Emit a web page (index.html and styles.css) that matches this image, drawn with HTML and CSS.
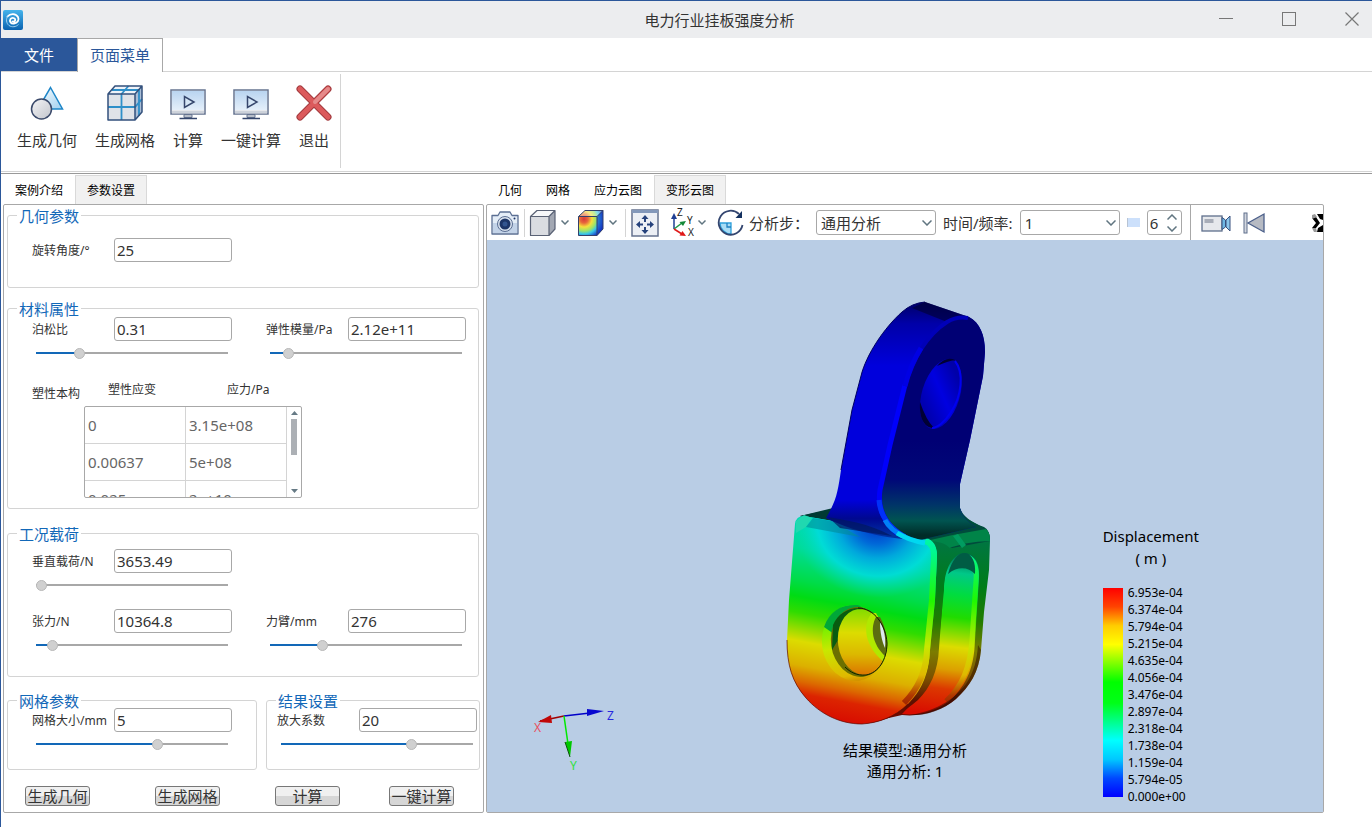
FILE: index.html
```html
<!DOCTYPE html>
<html lang="zh-CN">
<head>
    <meta charset="UTF-8">
    <meta name="viewport" content="width=device-width, initial-scale=1.0">
    <title>电力行业挂板强度分析</title>
    <link rel="stylesheet" href="styles.css">
</head>
<body>
    <header class="titlebar">
        <svg class="app-logo" width="20" height="20" viewBox="0 0 20 20">
            <defs>
                <linearGradient id="logoBg" x1="0" y1="0" x2="0" y2="1">
                    <stop offset="0" stop-color="#45b4ec"/>
                    <stop offset="1" stop-color="#0a62b0"/>
                </linearGradient>
            </defs>
            <rect width="20" height="20" rx="2" fill="url(#logoBg)"/>
            <path d="M9.500 11.500C11.500 12 13 10.500 12 9C11 7.500 8.500 7.500 7.500 9C6 11.500 8 14 11 13.500C14.500 13 16.500 10 15 7C13 3.500 7.500 3 4.500 6.500" fill="none" stroke="#fff" stroke-width="1.800" stroke-linecap="round"/>
            <path d="M4.500 6.500C3 9 3 13 6 15.500C9 17.500 13 17 15.500 14.500" fill="none" stroke="#9bd0f2" stroke-width="1"/>
        </svg>
        <h1 class="window-title">电力行业挂板强度分析</h1>
        <div class="window-buttons">
            <button type="button" aria-label="最小化"><svg width="16" height="16" viewBox="0 0 16 16"><path d="M1 7.500H15" stroke="#777" fill="none"/></svg></button>
            <button type="button" aria-label="最大化"><svg width="16" height="16" viewBox="0 0 16 16"><rect x="1.500" y="1.500" width="13" height="13" stroke="#777" fill="none"/></svg></button>
            <button type="button" aria-label="关闭"><svg width="16" height="16" viewBox="0 0 16 16"><path d="M1.500 1.500L14.500 14.500M14.500 1.500L1.500 14.500" stroke="#777" stroke-width="1.200" fill="none"/></svg></button>
        </div>
    </header>

    <nav class="menu-tabs">
        <button type="button" class="menu-file">文件</button>
        <button type="button" class="menu-tab">页面菜单</button>
    </nav>

    <div class="ribbon">
        <div class="ribbon-group">
            <button type="button" class="ribbon-btn">
                <svg width="36" height="36" viewBox="0 0 36 36">
                    <defs>
                        <linearGradient id="greyFill" x1="0" y1="0" x2="1" y2="1">
                            <stop offset="0" stop-color="#f4f4f6"/>
                            <stop offset="1" stop-color="#c2c5cc"/>
                        </linearGradient>
                        <linearGradient id="blueFill" x1="0" y1="0" x2="1" y2="1">
                            <stop offset="0" stop-color="#fff"/>
                            <stop offset="1" stop-color="#9fd0ef"/>
                        </linearGradient>
                    </defs>
                    <path d="M21.500 2.500L33.500 24H9Z" fill="url(#blueFill)" stroke="#1e86c8" stroke-width="1.500"/>
                    <circle cx="12.500" cy="24" r="10" fill="url(#greyFill)" stroke="#3b4a6b" stroke-width="1.500"/>
                </svg>
                <span>生成几何</span>
            </button>
            <button type="button" class="ribbon-btn">
                <svg width="36" height="36" viewBox="0 0 36 36">
                    <path d="M1 9L8 1H35V27L28 35H1Z" fill="#dfe2e8"/>
                    <path d="M1 9L8 1H35L28 9Z" fill="#eef2f8"/>
                    <path d="M28 9L35 1V27L28 35Z" fill="#a9bdd6"/>
                    <path d="M1 22H28L35 14M14.500 35V9L21.500 1M5 5H32V31" fill="none" stroke="#2e8fc9" stroke-width="1.800"/>
                    <path d="M1 9L8 1H35V27L28 35H1ZM1 9H28V35M28 9L35 1" fill="none" stroke="#33507c" stroke-width="1.500" stroke-linejoin="round"/>
                </svg>
                <span>生成网格</span>
            </button>
            <button type="button" class="ribbon-btn">
                <svg width="36" height="36" viewBox="0 0 36 36">
                    <defs>
                        <linearGradient id="screenFill" x1="0" y1="0" x2="0" y2="1">
                            <stop offset="0" stop-color="#b9d4f0"/>
                            <stop offset="1" stop-color="#e4effa"/>
                        </linearGradient>
                    </defs>
                    <rect x="1" y="5" width="34" height="24" fill="#fff" stroke="#667490" stroke-width="1.500"/>
                    <rect x="2" y="6" width="32" height="19" fill="url(#screenFill)"/>
                    <rect x="2" y="25.500" width="32" height="3" fill="#cdd2da"/>
                    <path d="M14.500 11.500V22.500L24 17Z" fill="#d5e6f6" stroke="#35466c" stroke-width="1.500"/>
                    <path d="M14 29.500H22V32.500H14Z" fill="#b8bec9" stroke="#667490"/>
                    <path d="M9.500 33.500H27" stroke="#35466c" stroke-width="1.500"/>
                </svg>
                <span>计算</span>
            </button>
            <button type="button" class="ribbon-btn">
                <svg width="36" height="36" viewBox="0 0 36 36">
                    <rect x="1" y="5" width="34" height="24" fill="#fff" stroke="#667490" stroke-width="1.500"/>
                    <rect x="2" y="6" width="32" height="19" fill="url(#screenFill)"/>
                    <rect x="2" y="25.500" width="32" height="3" fill="#cdd2da"/>
                    <path d="M14.500 11.500V22.500L24 17Z" fill="#d5e6f6" stroke="#35466c" stroke-width="1.500"/>
                    <path d="M14 29.500H22V32.500H14Z" fill="#b8bec9" stroke="#667490"/>
                    <path d="M9.500 33.500H27" stroke="#35466c" stroke-width="1.500"/>
                </svg>
                <span>一键计算</span>
            </button>
            <button type="button" class="ribbon-btn">
                <svg width="36" height="36" viewBox="0 0 36 36">
                    <path d="M4 4L32 32M32 4L4 32" stroke="#a33a3e" stroke-width="7" stroke-linecap="round"/>
                    <path d="M4 4L32 32M32 4L4 32" stroke="#dc5a5c" stroke-width="5" stroke-linecap="round"/>
                    <path d="M32 4L19 17" stroke="#e58a8a" stroke-width="4" stroke-linecap="round"/>
                </svg>
                <span>退出</span>
            </button>
        </div>
    </div>

    <main class="workspace">
        <section class="side">
            <div class="page-tabs" role="tablist">
                <button type="button" role="tab" aria-selected="false">案例介绍</button>
                <button type="button" role="tab" aria-selected="true" class="active">参数设置</button>
            </div>
            <form class="panel params">
                <fieldset class="group geometry">
                    <legend>几何参数</legend>
                    <div class="field">
                        <label for="angle">旋转角度/°</label>
                        <input type="text" id="angle" value="25">
                    </div>
                </fieldset>

                <fieldset class="group material">
                    <legend>材料属性</legend>
                    <div class="field-row">
                        <div class="field">
                            <label for="poisson">泊松比</label>
                            <input type="text" id="poisson" value="0.31">
                            <input type="range" aria-label="泊松比" min="0" max="100" value="21" style="--value: 21%">
                        </div>
                        <div class="field">
                            <label for="modulus">弹性模量/Pa</label>
                            <input type="text" id="modulus" value="2.12e+11">
                            <input type="range" aria-label="弹性模量" min="0" max="100" value="7" style="--value: 7%">
                        </div>
                    </div>
                    <div class="plastic">
                        <span class="plastic-label">塑性本构</span>
                        <div>
                            <div class="plastic-head">
                                <span>塑性应变</span>
                                <span>应力/Pa</span>
                            </div>
                            <div class="plastic-box">
                                <table>
                                    <tbody>
                                        <tr><td>0</td><td>3.15e+08</td></tr>
                                        <tr><td>0.00637</td><td>5e+08</td></tr>
                                        <tr><td>0.025</td><td>2e+10</td></tr>
                                    </tbody>
                                </table>
                                <div class="scrollbar">
                                    <svg width="7" height="4" viewBox="0 0 7 4"><path d="M0 4L3.500 0L7 4Z" fill="#667a85"/></svg>
                                    <div class="scroll-thumb"></div>
                                    <svg width="7" height="4" viewBox="0 0 7 4"><path d="M0 0L3.500 4L7 0Z" fill="#667a85"/></svg>
                                </div>
                            </div>
                        </div>
                    </div>
                </fieldset>

                <fieldset class="group load">
                    <legend>工况载荷</legend>
                    <div class="field-row">
                        <div class="field">
                            <label for="vertical">垂直载荷/N</label>
                            <input type="text" id="vertical" value="3653.49">
                            <input type="range" aria-label="垂直载荷" min="0" max="100" value="0" style="--value: 0%">
                        </div>
                    </div>
                    <div class="field-row">
                        <div class="field">
                            <label for="tension">张力/N</label>
                            <input type="text" id="tension" value="10364.8">
                            <input type="range" aria-label="张力" min="0" max="100" value="6" style="--value: 6%">
                        </div>
                        <div class="field">
                            <label for="arm">力臂/mm</label>
                            <input type="text" id="arm" value="276">
                            <input type="range" aria-label="力臂" min="0" max="100" value="26" style="--value: 26%">
                        </div>
                    </div>
                </fieldset>

                <div class="group-row">
                    <fieldset class="group mesh">
                        <legend>网格参数</legend>
                        <div class="field">
                            <label for="meshSize">网格大小/mm</label>
                            <input type="text" id="meshSize" value="5">
                            <input type="range" aria-label="网格大小" min="0" max="100" value="64" style="--value: 64%">
                        </div>
                    </fieldset>
                    <fieldset class="group result">
                        <legend>结果设置</legend>
                        <div class="field">
                            <label for="scale">放大系数</label>
                            <input type="text" id="scale" value="20">
                            <input type="range" aria-label="放大系数" min="0" max="100" value="69" style="--value: 69%">
                        </div>
                    </fieldset>
                </div>

                <div class="actions">
                    <button type="button">生成几何</button>
                    <button type="button">生成网格</button>
                    <button type="button">计算</button>
                    <button type="button">一键计算</button>
                </div>
            </form>
        </section>

        <section class="view">
            <div class="page-tabs" role="tablist">
                <button type="button" role="tab" aria-selected="false">几何</button>
                <button type="button" role="tab" aria-selected="false">网格</button>
                <button type="button" role="tab" aria-selected="false">应力云图</button>
                <button type="button" role="tab" aria-selected="true" class="active">变形云图</button>
            </div>
            <div class="panel viewer">
                <div class="toolbar">
                    <button type="button" class="tool" aria-label="截图">
                        <svg width="28" height="28" viewBox="0 0 28 28">
                            <path d="M1 6.500H7L9 3H19L21 6.500H27V25H1Z" fill="#e4edf7" stroke="#5b6f93" stroke-width="1.300" stroke-linejoin="round"/>
                            <path d="M2 14H26V24H2Z" fill="#c3d3e8"/>
                            <circle cx="14" cy="15" r="7.500" fill="#d9e2ee" stroke="#5b6f93"/>
                            <circle cx="14" cy="15" r="5.500" fill="#1d3567"/>
                            <circle cx="14" cy="15" r="2.500" fill="#33558f"/>
                            <circle cx="23.500" cy="9.500" r="1" fill="#1d3567"/>
                        </svg>
                    </button>
                    <i class="sep"></i>
                    <button type="button" class="tool with-menu" aria-label="显示模式">
                        <svg width="28" height="28" viewBox="0 0 28 28">
                            <path d="M1.500 7.500L8 1.500H26V20L20 26.500H1.500Z" fill="#dadce1"/>
                            <path d="M1.500 7.500L8 1.500H26L20 7.500Z" fill="#f6f7f9"/>
                            <path d="M20 7.500L26 1.500V20L20 26.500Z" fill="#a3a8b3"/>
                            <path d="M1.500 7.500L8 1.500H26V20L20 26.500H1.500ZM1.500 7.500H20V26.500M20 7.500L26 1.500" fill="none" stroke="#5a6275" stroke-width="1.200" stroke-linejoin="round"/>
                        </svg>
                        <svg class="chevron" width="8" height="5" viewBox="0 0 8 5"><path d="M0.500 0.500L4 4L7.500 0.500"/></svg>
                    </button>
                    <button type="button" class="tool with-menu" aria-label="云图">
                        <svg width="28" height="28" viewBox="0 0 28 28">
                            <defs>
                                <radialGradient id="cubeHeat" gradientUnits="userSpaceOnUse" cx="7" cy="10" r="20">
                                    <stop offset="0" stop-color="#d8383a"/>
                                    <stop offset="0.200" stop-color="#e8663c"/>
                                    <stop offset="0.400" stop-color="#f5e03c"/>
                                    <stop offset="0.600" stop-color="#9be36a"/>
                                    <stop offset="0.750" stop-color="#3ac8e8"/>
                                    <stop offset="1" stop-color="#1438c8"/>
                                </radialGradient>
                            </defs>
                            <path d="M1.500 7.500L8 1.500H26V20L20 26.500H1.500Z" fill="url(#cubeHeat)"/>
                            <path d="M1.500 7.500L8 1.500H26L20 7.500Z" fill="#fff" opacity="0.350"/>
                            <path d="M20 7.500L26 1.500V20L20 26.500Z" fill="#1636c0" opacity="0.600"/>
                            <path d="M1.500 7.500L8 1.500H26V20L20 26.500H1.500ZM1.500 7.500H20V26.500M20 7.500L26 1.500" fill="none" stroke="#33406a" stroke-linejoin="round"/>
                        </svg>
                        <svg class="chevron" width="8" height="5" viewBox="0 0 8 5"><path d="M0.500 0.500L4 4L7.500 0.500"/></svg>
                    </button>
                    <i class="sep"></i>
                    <button type="button" class="tool" aria-label="适应窗口">
                        <svg width="28" height="28" viewBox="0 0 28 28">
                            <rect x="1" y="1" width="26" height="26" fill="#eceff5" stroke="#64728e" stroke-width="1.500"/>
                            <rect x="1" y="1" width="26" height="3" fill="#8398ba"/>
                            <path d="M14 6L17.500 10H15V13H13V10H10.500ZM14 25L17.500 21H15V18H13V21H10.500ZM5 15.500L9 12V14.500H12V16.500H9V19ZM23 15.500L19 12V14.500H16V16.500H19V19Z" fill="#26427c"/>
                        </svg>
                    </button>
                    <button type="button" class="tool with-menu axes" aria-label="视角">
                        <svg width="28" height="28" viewBox="0 0 28 28">
                            <path d="M4 20V8" stroke="#1f3f94" stroke-width="1.500"/>
                            <path d="M4 4L7 10H1Z" fill="#1f3f94"/>
                            <path d="M4 20L12 14" stroke="#1f9a44" stroke-width="1.500"/>
                            <path d="M16 12L13 17L9.500 13Z" fill="#148838"/>
                            <path d="M4 20L12 25" stroke="#e01818" stroke-width="1.500"/>
                            <path d="M16 27L9.500 26.500L12.500 22Z" fill="#e01818"/>
                            <text x="7" y="7" class="axis-name">Z</text>
                            <text x="17" y="15" class="axis-name">Y</text>
                            <text x="18" y="27" class="axis-name">X</text>
                        </svg>
                        <svg class="chevron" width="8" height="5" viewBox="0 0 8 5"><path d="M0.500 0.500L4 4L7.500 0.500"/></svg>
                    </button>
                    <button type="button" class="tool" aria-label="旋转">
                        <svg width="28" height="28" viewBox="0 0 28 28">
                            <path d="M3 14H14V25C8 25 3 20 3 14Z" fill="#a9dcf5" stroke="#2c9fda" stroke-width="1.300"/>
                            <path d="M10 14V18H14" fill="none" stroke="#1f7fc0" stroke-width="1.300"/>
                            <path d="M22 5A12 12 0 1 0 25.500 16" fill="none" stroke="#33456f" stroke-width="1.800"/>
                            <path d="M25 2V9H18.500Z" fill="#14305f"/>
                        </svg>
                    </button>
                    <label class="tool-label" for="step">分析步：</label>
                    <span class="select step-select">
                        <select id="step"><option>通用分析</option></select>
                        <svg class="chevron" width="10" height="6" viewBox="0 0 10 6"><path d="M0.500 0.500L5 5L9.500 0.500"/></svg>
                    </span>
                    <label class="tool-label" for="time">时间/频率:</label>
                    <span class="select time-select">
                        <select id="time"><option>1</option></select>
                        <svg class="chevron" width="10" height="6" viewBox="0 0 10 6"><path d="M0.500 0.500L5 5L9.500 0.500"/></svg>
                    </span>
                    <i class="mark"></i>
                    <span class="spin">
                        <input type="text" aria-label="帧" value="6">
                        <span class="spin-arrows">
                            <svg class="chevron" width="10" height="6" viewBox="0 0 10 6"><path d="M0.500 5.500L5 1L9.500 5.500"/></svg>
                            <svg class="chevron" width="10" height="6" viewBox="0 0 10 6"><path d="M0.500 0.500L5 5L9.500 0.500"/></svg>
                        </span>
                    </span>
                    <i class="sep tall"></i>
                    <button type="button" class="tool record" aria-label="录制">
                        <svg width="30" height="28" viewBox="0 0 30 28">
                            <rect x="1" y="7" width="20" height="15" fill="#e6e8ec" stroke="#5f6f8c" stroke-width="1.300"/>
                            <rect x="3.500" y="10" width="9" height="4" fill="#a8adb8"/>
                            <path d="M21 8.500L24.500 11V18L21 20.500Z" fill="#6fb7e4" stroke="#38507e"/>
                            <path d="M29 7L25 11V18L29 22Z" fill="#8cc6ec" stroke="#38507e"/>
                        </svg>
                    </button>
                    <button type="button" class="tool" aria-label="第一帧">
                        <svg width="24" height="28" viewBox="0 0 24 28">
                            <rect x="2" y="4" width="3" height="20" fill="#d3d7df" stroke="#5f6f8c"/>
                            <path d="M22 5V23L6 14Z" fill="#b6bac3" stroke="#4b5f8a" stroke-width="1.300"/>
                        </svg>
                    </button>
                    <button type="button" class="tool more" aria-label="更多">
                        <svg width="11" height="18" viewBox="0 0 11 18">
                            <path d="M5 0H11V6L8 5ZM0 4L4 3L8 9L4 14H0L4 9ZM6 14L11 11V18H5Z" fill="#000"/>
                            <path d="M0 1L3 0L5 3L0 5ZM0 14L4 14L5 18H2Z" fill="#999"/>
                        </svg>
                    </button>
                </div>

                <div class="canvas">
                    <svg class="model" width="220" height="440" viewBox="780 295 220 440">
                        <defs>
                            <linearGradient id="front" gradientUnits="userSpaceOnUse" x1="874" y1="525" x2="838" y2="721">
                                <stop offset="0" stop-color="#00d8b8"/>
                                <stop offset="0.180" stop-color="#00dc98"/>
                                <stop offset="0.340" stop-color="#00dc48"/>
                                <stop offset="0.420" stop-color="#00dc14"/>
                                <stop offset="0.500" stop-color="#30dc00"/>
                                <stop offset="0.640" stop-color="#dcdc00"/>
                                <stop offset="0.760" stop-color="#dcb000"/>
                                <stop offset="0.840" stop-color="#dc6800"/>
                                <stop offset="0.900" stop-color="#dc2400"/>
                                <stop offset="1" stop-color="#d80c00"/>
                            </linearGradient>
                            <radialGradient id="cold" gradientUnits="userSpaceOnUse" cx="876" cy="526" r="84" gradientTransform="translate(876 526) rotate(8) scale(1 0.850) translate(-876 -526)">
                                <stop offset="0" stop-color="#0030c8"/>
                                <stop offset="0.250" stop-color="#0068d8"/>
                                <stop offset="0.450" stop-color="#00a8dc"/>
                                <stop offset="0.700" stop-color="#00dcdc" stop-opacity="0.900"/>
                                <stop offset="1" stop-color="#00dcb0" stop-opacity="0"/>
                            </radialGradient>
                            <linearGradient id="edge" gradientUnits="userSpaceOnUse" x1="0" y1="530" x2="0" y2="720">
                                <stop offset="0" stop-color="#00744c"/>
                                <stop offset="0.300" stop-color="#007c18"/>
                                <stop offset="0.480" stop-color="#207c00"/>
                                <stop offset="0.640" stop-color="#7c7c00"/>
                                <stop offset="0.780" stop-color="#7c5000"/>
                                <stop offset="0.900" stop-color="#5c1000"/>
                                <stop offset="1" stop-color="#700800"/>
                            </linearGradient>
                            <linearGradient id="inner" gradientUnits="userSpaceOnUse" x1="970" y1="553" x2="950" y2="716">
                                <stop offset="0" stop-color="#005c48"/>
                                <stop offset="0.130" stop-color="#00c888"/>
                                <stop offset="0.260" stop-color="#00dc40"/>
                                <stop offset="0.400" stop-color="#20dc00"/>
                                <stop offset="0.580" stop-color="#dcdc00"/>
                                <stop offset="0.720" stop-color="#dca000"/>
                                <stop offset="0.840" stop-color="#dc3800"/>
                                <stop offset="1" stop-color="#d80c00"/>
                            </linearGradient>
                            <linearGradient id="chamfer" gradientUnits="userSpaceOnUse" x1="0" y1="515" x2="0" y2="720">
                                <stop offset="0" stop-color="#00f0d8"/>
                                <stop offset="0.180" stop-color="#00f890"/>
                                <stop offset="0.420" stop-color="#20f800"/>
                                <stop offset="0.640" stop-color="#c8e800"/>
                                <stop offset="0.780" stop-color="#e0b800"/>
                                <stop offset="0.880" stop-color="#b03800"/>
                                <stop offset="1" stop-color="#900800"/>
                            </linearGradient>
                            <linearGradient id="armSide" gradientUnits="userSpaceOnUse" x1="0" y1="300" x2="0" y2="535">
                                <stop offset="0" stop-color="#000060"/>
                                <stop offset="0.100" stop-color="#0000a8"/>
                                <stop offset="0.280" stop-color="#0000dc"/>
                                <stop offset="0.850" stop-color="#0000dc"/>
                                <stop offset="0.930" stop-color="#000890"/>
                                <stop offset="1" stop-color="#0030a0"/>
                            </linearGradient>
                            <linearGradient id="armFace" gradientUnits="userSpaceOnUse" x1="0" y1="440" x2="0" y2="535">
                                <stop offset="0" stop-color="#000074"/>
                                <stop offset="0.420" stop-color="#000878"/>
                                <stop offset="0.680" stop-color="#003468"/>
                                <stop offset="0.850" stop-color="#005450"/>
                                <stop offset="1" stop-color="#002c28"/>
                            </linearGradient>
                            <linearGradient id="bore" gradientUnits="userSpaceOnUse" x1="928" y1="410" x2="960" y2="382">
                                <stop offset="0" stop-color="#0000b0"/>
                                <stop offset="0.500" stop-color="#0000e0"/>
                                <stop offset="1" stop-color="#0000a8"/>
                            </linearGradient>
                            <linearGradient id="far" gradientUnits="userSpaceOnUse" x1="870" y1="605" x2="858" y2="676">
                                <stop offset="0" stop-color="#70dc00"/>
                                <stop offset="0.400" stop-color="#dcdc00"/>
                                <stop offset="0.700" stop-color="#dcb800"/>
                                <stop offset="1" stop-color="#dc7000"/>
                            </linearGradient>
                        </defs>
                        <!-- rear lug -->
                        <path d="M925 540L962 516L984 528Q990 531 990 540L989 570L984 612L981 650C979 672 970 686 956 699C942 711 922 717 902 715L880 720Z" fill="url(#edge)"/>
                        <path d="M944 590C944 568 954 553 964 553C974 553 980 562 979 578L975 640C974 672 964 688 948 702C934 712 918 716 902 714L925 690L938 650Z" fill="url(#inner)"/>
                        <path d="M968 557C975 560 977 568 976 580L972 640C970 668 962 686 946 701" fill="none" stroke="url(#chamfer)" stroke-width="5"/>
                        <path d="M948 574C952 560 958 553 965 553C972 554 976 562 975 574C968 567 958 566 948 574Z" fill="#005c44"/>
                        <path d="M981 650C979 672 970 686 956 699C942 711 924 716 910 715C940 710 956 697 966 684C974 672 977 660 978 645Z" fill="#280800" opacity="0.500"/>
                        <!-- top faces -->
                        <path d="M800 516L829 510L900 500L960 508Q964 520 984 527Q990 530 990 541L952 548L925 541Z" fill="#004c3c"/>
                        <path d="M926 541Q955 534 986 529Q990 532 990 541Q965 541 942 551Z" fill="#008448"/>
                        <path d="M958 534L966 545L962 548L953 536Z" fill="#009c60"/>
                        <path d="M880 522L961 514L968 523L915 538Z" fill="#002824"/>
                        <path d="M800 516L833 508L840 520L812 522Z" fill="#003a34"/>
                        <!-- front lug thickness -->
                        <path d="M930 541Q947 542 951 550C945 566 943 590 942 610L939 648C938 672 930 688 918 700C905 712 885 721 870 723L925 680L936 610Z" fill="url(#edge)"/>
                        <!-- front lug face -->
                        <path d="M795 524Q796 516 804 516L850 524L922 539Q937 541 937 556L935 600L930 650C929 676 920 692 908 704C895 717 878 723 862 724C840 724 820 714 806 698C792 682 787 665 787 640L789 600Z" fill="url(#front)"/>
                        <path d="M795 524Q796 516 804 516L850 524L922 539Q937 541 937 556L935 610L788 610Z" fill="url(#cold)"/>
                        <path d="M925 541Q934 543 934 556L932 600L927 650C926 674 917 690 904 703" fill="none" stroke="url(#chamfer)" stroke-width="6"/>
                        <path d="M787 640C787 665 792 682 806 698C820 714 840 724 862 724C878 723 895 717 908 704" fill="none" stroke="#600800" stroke-width="1" opacity="0.700"/>
                        <path d="M796 521L804 515L812 518L806 527L796 533Z" fill="#20d8b0"/>
                        <path d="M806 527L813 518L832 521L860 537Z" fill="#008c98" opacity="0.600"/>
                        <!-- pin hole -->
                        <ellipse cx="854" cy="643" rx="32" ry="38" fill="url(#chamfer)" transform="rotate(-8 854 643)"/>
                        <path d="M824 627C830 610 842 604 858 605L878 615L852 618L834 634Z" fill="#00a838"/>
                        <ellipse cx="859" cy="642" rx="28" ry="35" fill="#6c7000" transform="rotate(-8 859 642)"/>
                        <path d="M833 625C838 613 849 607 862 608L846 622L838 640L832 650Z" fill="#085c10"/>
                        <ellipse cx="862" cy="642" rx="24" ry="33" fill="url(#far)" transform="rotate(-8 862 642)"/>
                        <path d="M872 613C862 624 864 646 884 662C888 645 887 630 876 613Z" fill="#b0e800"/>
                        <path d="M876 617C870 628 872 644 885 656C888 640 886 628 880 617Z" fill="#5c6c10"/>
                        <path d="M880 622C880 632 882 642 885 648C886 638 884 628 880 622Z" fill="#dce8f0"/>
                        <path d="M858 608C874 608 886 625 887 643C887 660 878 673 866 675C857 676 850 672 845 667" fill="none" stroke="#102000" stroke-width="1"/>
                        <!-- arm -->
                        <path d="M826 518C837 500 838 490 841 470L852 410L861 376C866 355 884 328 902 312Q912 303 925 302L969 317C980 323 985 335 985 352L983 376L970 440L960 484L960 508Q963 520 976 527L920 540C898 540 858 534 826 518Z" fill="url(#armSide)"/>
                        <path d="M841 470L852 410L861 376C866 355 884 328 902 312Q912 303 925 302" fill="none" stroke="#000060"/>
                        <path d="M925 302L969 317Q957 316 947 322L912 308Z" fill="#000030" opacity="0.600"/>
                        <path d="M969 317C980 323 985 335 985 352L983 376L970 440L960 484L960 508Q963 520 976 527L920 540C900 535 881 520 880 492L890 445L905 385C912 358 928 333 947 321Q957 315 969 317Z" fill="url(#armFace)"/>
                        <path d="M905 385L890 445L880 490C877 510 885 523 897 533" fill="none" stroke="#0000fc" stroke-width="5"/>
                        <path d="M905 386C912 359 928 334 947 322Q957 316 968 318" fill="none" stroke="#0000b8" stroke-width="4"/>
                        <path d="M905 386Q910 366 921 348" fill="none" stroke="#0000e4" stroke-width="5"/>
                        <path d="M879 500C880 515 888 527 905 537" fill="none" stroke="#0030f8" stroke-width="5"/>
                        <path d="M885 520Q890 530 905 537" fill="none" stroke="#0080f8" stroke-width="5"/>
                        <path d="M897 533Q908 540 925 543" fill="none" stroke="#00d8f0" stroke-width="5"/>
                        <path d="M828 517C845 520 868 523 892 536L872 533L840 528Z" fill="#001860" opacity="0.700"/>
                        <ellipse cx="941" cy="394" rx="19" ry="36" fill="url(#bore)" transform="rotate(17 941 394)"/>
                        <path d="M920 402C919 418 924 428 934 428Q926 420 920 402ZM937 366Q946 356 955 360Q948 361 937 366Z" fill="#000034"/>
                        <path d="M955 361C964 372 962 396 951 412C945 422 937 428 932 428" fill="none" stroke="#0000f0" stroke-width="2"/>
                    </svg>

                    <p class="caption">结果模型:通用分析<br>通用分析: 1</p>

                    <svg class="triad" width="90" height="70" viewBox="0 0 90 70">
                        <path d="M34 10L10 15" stroke="#a00000" stroke-width="1.500"/>
                        <path d="M8 16L21 9L22 17Z" fill="#c00808"/>
                        <path d="M34 10L60 7" stroke="#0000c8" stroke-width="1.500"/>
                        <path d="M74 5L57 3V10Z" fill="#0808d0"/>
                        <path d="M34 10L38 38" stroke="#00e800" stroke-width="1.500"/>
                        <path d="M40 51L35 36L42 35Z" fill="#00c800"/>
                        <path d="M35 36L40 51" stroke="#105010"/>
                        <text x="4" y="26" class="triad-name x">X</text>
                        <text x="77" y="14" class="triad-name z">Z</text>
                        <text x="40" y="64" class="triad-name y">Y</text>
                    </svg>

                    <div class="legend">
                        <p class="legend-title">Displacement<br>( m )</p>
                        <div class="legend-body">
                            <div class="legend-bar"></div>
                            <ul>
                                <li>6.953e-04</li>
                                <li>6.374e-04</li>
                                <li>5.794e-04</li>
                                <li>5.215e-04</li>
                                <li>4.635e-04</li>
                                <li>4.056e-04</li>
                                <li>3.476e-04</li>
                                <li>2.897e-04</li>
                                <li>2.318e-04</li>
                                <li>1.738e-04</li>
                                <li>1.159e-04</li>
                                <li>5.794e-05</li>
                                <li>0.000e+00</li>
                            </ul>
                        </div>
                    </div>
                </div>
            </div>
        </section>
    </main>
</body>
</html>
```
FILE: styles.css
```css
* {
    margin: 0;
    padding: 0;
    box-sizing: border-box;
}

body {
    display: flex;
    flex-direction: column;
    min-height: 100vh;
    background: #fff;
    border-top: 1px solid #2b579a;
    border-left: 1px solid #2b579a;
    color: #333;
    font-family: "Noto Sans", "Noto Sans CJK SC", sans-serif;
    font-size: 15px;
}

button,
input,
select {
    font: inherit;
    color: inherit;
}

button {
    background: none;
    border: none;
}

svg {
    display: block;
    flex: none;
}

/* title bar */
.titlebar {
    display: flex;
    align-items: center;
    height: 37px;
    padding-left: 2px;
    background: #ecedef;
}

.window-title {
    flex: 1;
    padding-left: 222px;
    font-size: 15px;
    font-weight: 400;
    text-align: center;
}

.window-buttons {
    display: flex;
    gap: 47px;
    padding: 0 12px 2px 24px;
}

/* menu */
.menu-tabs {
    display: flex;
    height: 34px;
    border-bottom: 1px solid #d4d4d4;
}

.menu-file {
    width: 76px;
    height: 33px;
    background: #2b579a;
    color: #fff;
}

.menu-tab {
    height: 34px;
    padding: 0 12px 2px;
    background: #fff;
    border: 1px solid #a8a8a8;
    border-bottom: none;
    color: #2b579a;
}

/* ribbon */
.ribbon {
    height: 100px;
    padding: 2px 0 3px;
    border-bottom: 1px solid #d4d4d4;
}

.ribbon-group {
    display: inline-flex;
    align-items: flex-start;
    gap: 18px;
    height: 94px;
    padding: 11px 11px 0 16px;
    border-right: 1px solid #d4d4d4;
}

.ribbon-btn {
    display: flex;
    flex-direction: column;
    align-items: center;
    gap: 9px;
    line-height: 20px;
}

/* icons are wider than a two-character label */
.ribbon-btn svg {
    margin: 0 -3px;
}

/* workspace */
.workspace {
    display: flex;
    flex: 1;
    gap: 2px;
    margin-top: 1px;
    padding: 1px 48px 14px 2px;
    border-top: 1px solid #999;
}

.side,
.view {
    display: flex;
    flex-direction: column;
}

.side {
    flex: 0 0 481px;
}

.view {
    flex: 1;
    min-width: 0;
}

.page-tabs {
    display: flex;
    height: 29px;
}

.page-tabs button {
    padding: 0 12px;
    color: #000;
    font-size: 12px;
}

.page-tabs .active {
    padding: 0 11px;
    background: #f1f1f1;
    border: 1px solid #d9d9d9;
    border-bottom: none;
}

.panel {
    flex: 1;
    border: 1px solid #a8a8a8;
    border-radius: 2px;
}

/* parameters */
.params {
    padding: 2px 3px 0;
}

.group {
    margin-right: 1px;
    padding-left: 24px;
    border: 1px solid #d4d4d4;
    border-radius: 3px;
}

.group legend {
    height: 16px;
    margin-left: -15px;
    padding: 0 2px;
    color: #1268b8;
    line-height: 18px;
}

.geometry {
    padding-top: 15px;
    padding-bottom: 25px;
}

.material {
    margin-top: 12px;
    padding-top: 1px;
    padding-bottom: 10px;
}

.load {
    margin-top: 16px;
    padding-top: 8px;
    padding-bottom: 19px;
}

.load .field-row + .field-row {
    margin-top: 12px;
}

.group-row {
    display: flex;
    gap: 8px;
    margin-top: 15px;
    margin-right: -1px;
}

.mesh,
.result {
    padding-bottom: 13px;
}

.mesh {
    flex: 1;
}

.result {
    flex: 0 0 214px;
    padding-left: 10px;
}

.result legend {
    margin-left: -1px;
}

.field-row {
    display: flex;
    gap: 34px;
}

.field {
    display: grid;
    grid-template-columns: 82px 118px;
}

.field label,
.plastic-label,
.plastic-head {
    font-size: 12px;
    line-height: 25px;
    white-space: nowrap;
}

.field label {
    height: 24px;
}

.field input[type="text"] {
    width: 100%;
    height: 24px;
    padding: 0 2px 1px;
    border: 1px solid #a8a8a8;
    border-radius: 3px;
}

.field input[type="range"] {
    grid-column: 1 / 3;
    height: 24px;
    margin: 0 4px;
    appearance: none;
    background: linear-gradient(to right, #1268b8 var(--value), #a8a8a8 var(--value)) center / 100% 2px no-repeat;
}

.field input[type="range"]::-webkit-slider-thumb {
    appearance: none;
    width: 11px;
    height: 11px;
    background: #d0d0d0;
    border: 1px solid #b8b8b8;
    border-radius: 50%;
}

.plastic {
    display: flex;
    gap: 4px;
    margin-top: 12px;
}

.plastic-label {
    padding-top: 4px;
}

.plastic-head {
    display: flex;
    gap: 71px;
    padding-left: 24px;
}

.plastic-box {
    display: flex;
    width: 218px;
    height: 92px;
    margin-top: 4px;
    border: 1px solid #a8a8a8;
    border-radius: 2px;
    overflow: hidden;
}

.plastic-box table {
    flex: none;
    width: 202px;
    height: 111px;
    border-collapse: separate;
    border-spacing: 0;
    table-layout: fixed;
    color: #666;
}

.plastic-box td {
    height: 37px;
    padding-left: 3px;
    border-right: 1px solid #d4d4d4;
    border-bottom: 1px solid #d4d4d4;
}

.scrollbar {
    display: flex;
    flex: 1;
    flex-direction: column;
    align-items: center;
    padding: 4px 0;
}

.scroll-thumb {
    width: 6px;
    height: 36px;
    margin: 4px 0 auto;
    background: #acb0b5;
}

.actions {
    display: grid;
    grid-template-columns: 130px 120px 114px auto;
    margin-top: 16px;
    padding-left: 18px;
}

.actions button {
    width: 65px;
    height: 20px;
    background: linear-gradient(#f0f0f0 50%, #d6d6d6 50%);
    border: 1px solid #777;
    border-radius: 3px;
    line-height: 18px;
    white-space: nowrap;
}

/* viewer */
.viewer {
    display: flex;
    flex-direction: column;
}

.toolbar {
    display: flex;
    align-items: center;
    height: 35px;
    padding-left: 4px;
}

.tool {
    display: flex;
    align-items: center;
}

.with-menu {
    gap: 4px;
    margin-right: 8px;
}

.chevron {
    fill: none;
    stroke: #607580;
    stroke-width: 1.5;
}

.axes {
    gap: 0;
    margin: 0 11px;
}

.axes svg {
    overflow: visible;
}

.axis-name {
    fill: #222;
    font-size: 10px;
}

.sep {
    width: 1px;
    height: 28px;
    margin: 0 4px 0 5px;
    background: #d4d4d4;
}

.with-menu + .sep {
    margin: 0 5px 0 0;
}

.sep.tall {
    height: 35px;
    margin: 0 10px 0 8px;
    background: #a8a8a8;
}

.tool-label {
    margin: 0 7px 0 4px;
    white-space: nowrap;
}

.select {
    display: grid;
    align-items: center;
    height: 25px;
}

.select select,
.select .chevron {
    grid-area: 1 / 1;
}

.select select {
    height: 25px;
    padding: 0 4px;
    appearance: none;
    background: #fff;
    border: 1px solid #a8a8a8;
    border-radius: 3px;
}

.select .chevron {
    justify-self: end;
    margin-right: 4px;
    pointer-events: none;
}

.step-select {
    width: 120px;
    margin-right: 3px;
}

.time-select {
    width: 100px;
}

.mark {
    width: 13px;
    height: 9px;
    margin: 0 7px;
    background: #cce0fb;
    border-left: 1px solid #b8c4d4;
}

.spin {
    display: flex;
    align-items: center;
    width: 35px;
    height: 25px;
    padding: 0 4px 0 2px;
    border: 1px solid #a8a8a8;
    border-radius: 3px;
}

.spin input {
    width: 17px;
    border: none;
    background: none;
}

.spin-arrows {
    display: grid;
    gap: 6px;
}

.record {
    margin-right: 11px;
}

.more {
    margin-left: auto;
}

.canvas {
    position: relative;
    flex: 1;
    min-height: 572px;
    background: #b9cde5;
    color: #000;
}

.model {
    position: absolute;
    left: calc(50% - 125px);
    bottom: 77px;
}

.caption {
    position: absolute;
    right: 0;
    bottom: 30px;
    left: 0;
    line-height: 21px;
    text-align: center;
}

.triad {
    position: absolute;
    bottom: 36px;
    left: 43px;
}

.triad-name {
    font-size: 12px;
}

.triad-name.x {
    fill: #e85060;
}

.triad-name.y {
    fill: #30e040;
}

.triad-name.z {
    fill: #2828e0;
}

.legend {
    position: absolute;
    right: 124px;
    bottom: 7px;
}

.legend-title {
    margin-bottom: 15px;
    line-height: 22px;
    text-align: center;
}

.legend-body {
    display: flex;
    gap: 5px;
    font-size: 12px;
    line-height: 17px;
}

.legend-bar {
    width: 20px;
    margin: 4px 0 8px;
    background: linear-gradient(#f00, #f40 9%, #fc0 18%, #ff0 27%, #0f0 45%, #00ff18 55%, #0ff 73%, #00c8ff 82%, #0048ff 91%, #00f);
}

.legend ul {
    list-style: none;
}
```
